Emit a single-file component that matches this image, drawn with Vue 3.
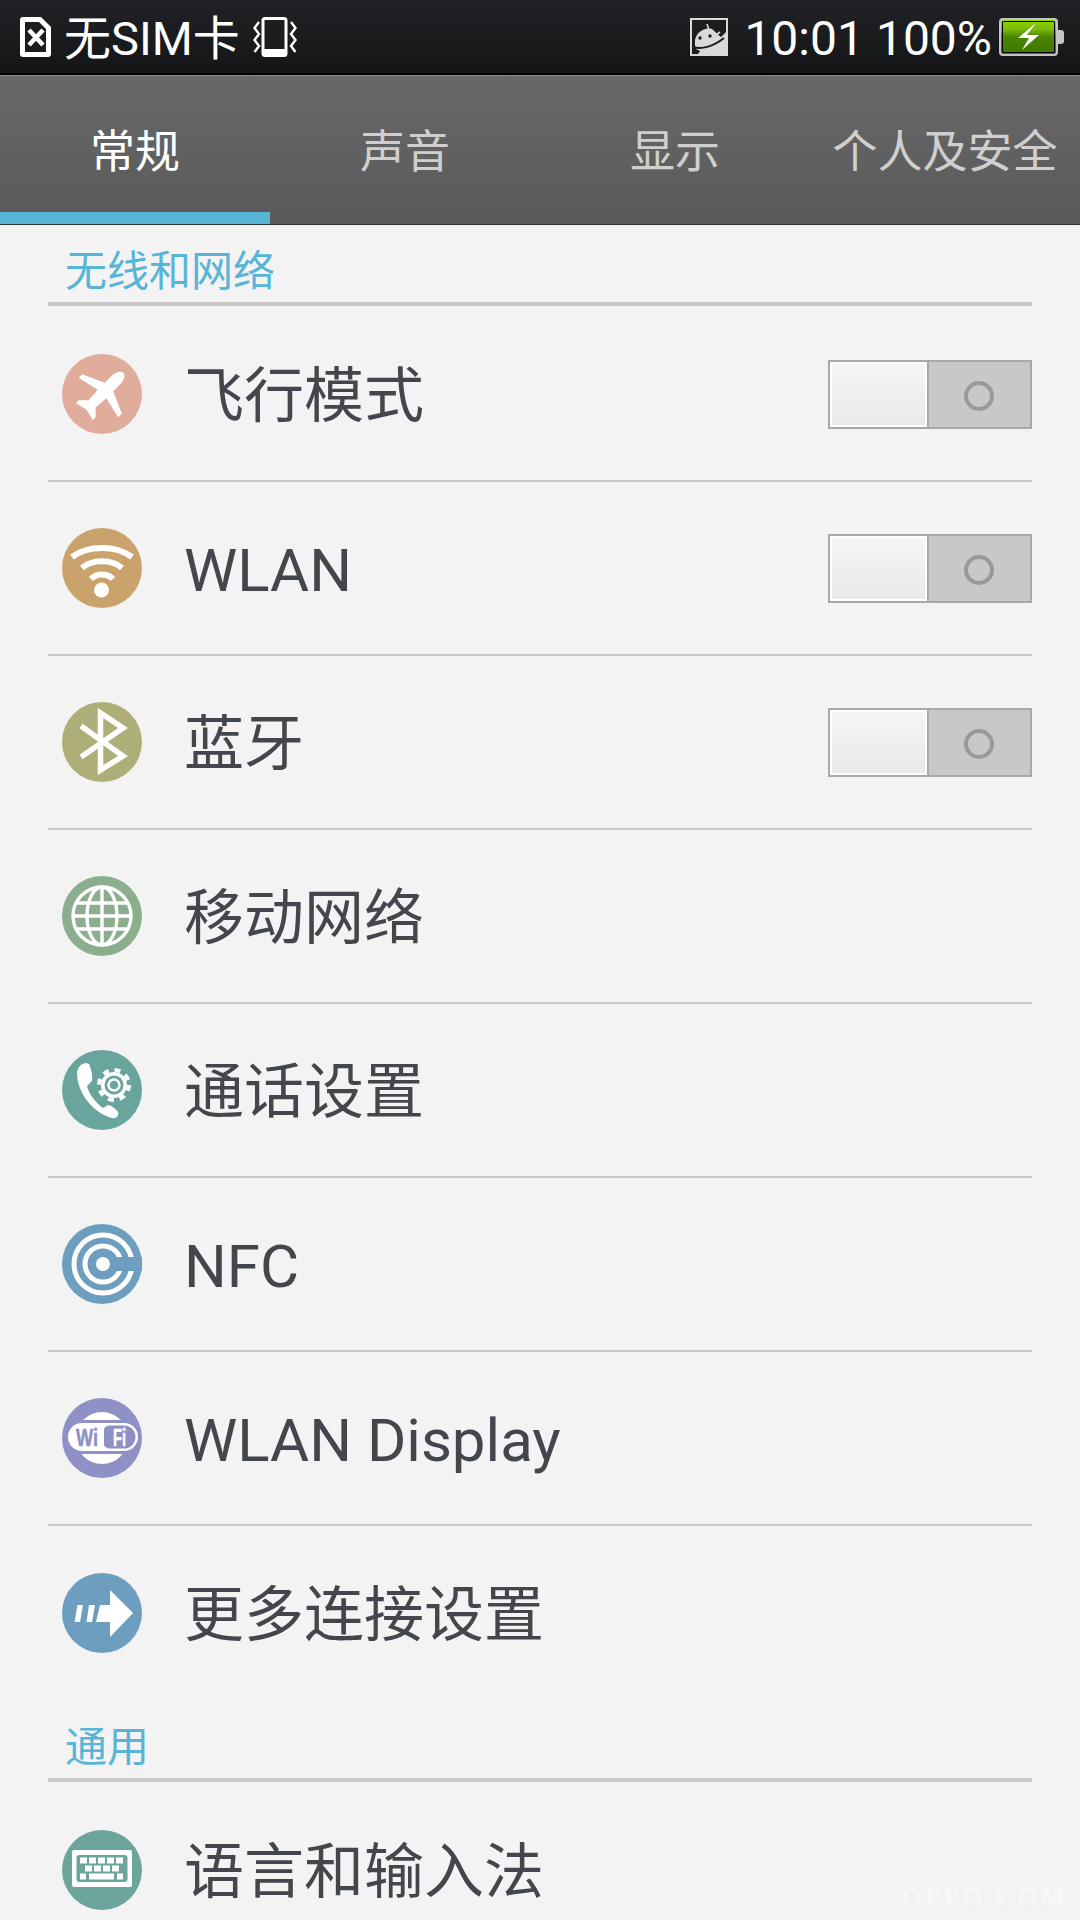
<script setup>
const wireless = [
  { icon: 'plane', color: '#e0ac9c', label: '飞行模式', toggle: true },
  { icon: 'wifi', color: '#c9a36b', label: 'WLAN', toggle: true, latin: true },
  { icon: 'bt', color: '#aeaf78', label: '蓝牙', toggle: true },
  { icon: 'globe', color: '#8aae8e', label: '移动网络' },
  { icon: 'call', color: '#69a59d', label: '通话设置' },
  { icon: 'nfc', color: '#6e9ebf', label: 'NFC', latin: true },
  { icon: 'display', color: '#8f90c6', label: 'WLAN Display', latin: true },
  { icon: 'more', color: '#6e9ebf', label: '更多连接设置' },
]
const tabs = ['常规', '声音', '显示', '个人及安全']
</script>

<template>
  <div class="page">
    <header class="status">
      <svg class="sim" viewBox="0 0 31 40">
        <path d="M3 0H21L31 10V37a3 3 0 0 1-3 3H3a3 3 0 0 1-3-3V3a3 3 0 0 1 3-3Z" fill="#fff" />
        <path d="M5 5H19L26 12V35H5Z" fill="#1c1d1f" />
        <path d="M9 13L23 28M23 13L9 28" stroke="#fff" stroke-width="4.500" fill="none" />
      </svg>
      <span class="carrier">无SIM卡</span>
      <svg class="vibrate" viewBox="0 0 44 40">
        <path d="M12 1.500h19a2 2 0 0 1 2 2v33a2 2 0 0 1-2 2H12a2 2 0 0 1-2-2v-33a2 2 0 0 1 2-2Z" fill="#1c1d1f" stroke="#fff" stroke-width="3" />
        <rect x="10" y="32" width="23" height="7" fill="#fff" />
        <path d="M6 5L1.500 11L6 17L1.500 23L6 29L1.500 35M38 5L42.500 11L38 17L42.500 23L38 29L42.500 35" stroke="#fff" stroke-width="2.400" fill="none" />
      </svg>
      <span class="spacer"></span>
      <svg class="android" viewBox="0 0 38 38">
        <path d="M0 0H38V38H0Z" fill="#d9d9d9" />
        <path d="M2 2H36V14L30 20L14 12L5 22L6 31L10 33L8 36H2Z" fill="#1c1d1f" />
        <path d="M5 24C5 15 14 9 22 11L33 21C31 28 14 33 5 28Z" fill="#d9d9d9" />
        <path d="M17 6L19 12M30 14L26 17" stroke="#d9d9d9" stroke-width="1.600" />
        <circle cx="10" cy="20" r="1.700" fill="#1c1d1f" />
        <circle cx="20" cy="18" r="1.700" fill="#1c1d1f" />
        <path d="M3 29C12 32 24 28 34 20" stroke="#1c1d1f" stroke-width="2" fill="none" />
      </svg>
      <span class="clock">10:01</span>
      <span class="level">100%</span>
      <div class="battery">
        <div class="cell">
          <svg class="bolt" viewBox="0 0 23 27"><path d="M19 0L1 15H12L5 27L22 12H10Z" fill="#fff" /></svg>
        </div>
        <div class="nub"></div>
      </div>
    </header>

    <nav class="tabs">
      <div v-for="(tab, i) in tabs" :key="tab" class="tab" :class="{ active: i === 0 }">{{ tab }}</div>
    </nav>

    <main class="list">
      <h2 class="section first">无线和网络</h2>
      <div v-for="row in wireless" :key="row.label" class="row">
        <svg class="icon" viewBox="0 0 80 80">
          <circle cx="40" cy="40" r="40" :fill="row.color" />
          <g v-if="row.icon === 'plane'" transform="translate(40 40) rotate(45)">
            <path d="M0-30C3-30 6-26 6-20V-10L28 0V5L6 0L5 14L12 21V25L0 22L-12 25V21L-5 14L-6 0L-28 5V0L-6-10V-20C-6-26-3-30 0-30Z" fill="#fff" />
          </g>
          <g v-else-if="row.icon === 'wifi'">
            <path d="M10 29C26 17 54 17 70 29M20 40C30 31 50 31 60 40M29 51C35 45 45 45 51 51" stroke="#fff" stroke-width="6" fill="none" />
            <circle cx="39.500" cy="62" r="7.500" fill="#fff" />
          </g>
          <path v-else-if="row.icon === 'bt'" d="M19 24L61 54L38.500 68V11L61 26L19 55" stroke="#fff" stroke-width="5.500" fill="none" />
          <g v-else-if="row.icon === 'globe'" stroke="#fff" stroke-width="3.400" fill="none">
            <circle cx="40" cy="40" r="29" />
            <path d="M40 11V69M11 40H69M15 27H65M15 53H65" />
            <ellipse cx="40" cy="40" rx="15" ry="29" />
          </g>
          <g v-else-if="row.icon === 'call'">
            <path d="M24 13C18 14 15 18 15 24C16 45 32 63 50 68C55 69 57 65 56 62C54 59 49 55 46 55L41 58C33 52 27 44 25 36L30 31C31 27 29 18 27 14Z" fill="#fff" />
            <circle cx="52" cy="35" r="13" fill="#fff" />
            <circle cx="52" cy="35" r="15" fill="none" stroke="#fff" stroke-width="4" stroke-dasharray="5.900 5.900" />
            <circle cx="52" cy="35" r="9.500" :fill="row.color" />
            <circle cx="52" cy="35" r="5.500" :fill="row.color" stroke="#fff" stroke-width="2.400" />
          </g>
          <g v-else-if="row.icon === 'nfc'">
            <circle cx="41" cy="40" r="29" fill="none" stroke="#fff" stroke-width="5" />
            <circle cx="41" cy="40" r="18" fill="none" stroke="#fff" stroke-width="5" />
            <rect x="41" y="33" width="39" height="14" :fill="row.color" />
            <circle cx="41" cy="40" r="7" fill="#fff" />
          </g>
          <g v-else-if="row.icon === 'display'">
            <circle cx="40" cy="40" r="26" fill="#fff" />
            <rect x="4" y="22" width="72" height="34" :fill="row.color" />
            <rect x="6" y="25" width="70" height="28" rx="14" fill="#fff" />
            <path d="M47 27.500H62a11.500 11.500 0 0 1 0 23H47a8 8 0 0 1-5-3V30.500a8 8 0 0 1 5-3Z" :fill="row.color" />
            <text x="14" y="47.500" class="wi" textLength="22" lengthAdjust="spacingAndGlyphs">Wi</text>
            <text x="51" y="47.500" class="fi" textLength="13" lengthAdjust="spacingAndGlyphs">Fi</text>
          </g>
          <g v-else-if="row.icon === 'more'" fill="#fff">
            <path d="M15.500 32H21L18 49H12.500ZM27 32H33L30 49H24.500ZM38 32H48V17L71 40L48 64V49H34Z" />
          </g>
        </svg>
        <span class="label" :class="row.latin ? 'latin' : 'cjk'">{{ row.label }}</span>
        <div v-if="row.toggle" class="switch">
          <div class="thumb"></div>
          <div class="off"><span class="ring"></span></div>
        </div>
      </div>

      <h2 class="section second">通用</h2>
      <div class="row last">
        <svg class="icon" viewBox="0 0 80 80">
          <circle cx="40" cy="40" r="40" fill="#6ca59c" />
          <rect x="10" y="20" width="60" height="37" rx="2" fill="#fff" />
          <rect x="14.500" y="25" width="51" height="27" rx="3" fill="#6ca59c" />
          <g fill="#fff">
            <rect v-for="x in [18, 27, 36, 45, 54]" :key="x" :x="x" y="27.500" width="7" height="6" />
            <rect v-for="x in [23, 32, 41, 50]" :key="x" :x="x" y="35.500" width="7" height="6" />
            <rect x="18" y="43.500" width="6" height="6" />
            <rect x="27" y="43.500" width="25" height="6" />
            <rect x="55" y="43.500" width="6" height="6" />
          </g>
        </svg>
        <span class="label cjk">语言和输入法</span>
      </div>
    </main>

    <div class="watermark">OPPO.COM</div>
  </div>
</template>

<style scoped>
.page {
  position: relative;
  width: 1080px;
  height: 1920px;
  overflow: hidden;
  background: #f3f3f3;
  font-family: Roboto, "Noto Sans CJK SC", sans-serif;
}
.status {
  box-sizing: border-box;
  height: 75px;
  display: flex;
  align-items: center;
  padding-left: 20px;
  color: #fff;
  background: linear-gradient(#212225, #141517);
  border-bottom: 2px solid #000;
}
.sim { width: 31px; height: 40px; }
.carrier { margin-left: 13px; margin-top: 4px; font-size: 47px; line-height: 50px; }
.vibrate { margin-left: 13px; width: 44px; height: 40px; }
.spacer { flex: 1; }
.android { width: 38px; height: 38px; }
.clock { margin-left: 16px; margin-top: 5px; font-size: 48px; line-height: 50px; }
.level { margin-left: 12px; margin-top: 5px; font-size: 48px; line-height: 50px; }
.battery { margin-left: 7px; margin-right: 16px; display: flex; align-items: center; }
.cell {
  box-sizing: border-box;
  width: 59px;
  height: 38px;
  border: 2px solid #c5c5c5;
  border-radius: 4px;
  outline: 1px solid #000;
  outline-offset: -4px;
  background: linear-gradient(#8ed70a 0, #7ab80a 28%, #4a8400 50%, #3f7800 100%);
  display: flex;
  align-items: center;
  justify-content: center;
}
.bolt { width: 23px; height: 27px; }
.nub { width: 6px; height: 14px; background: #c5c5c5; border-radius: 0 3px 3px 0; }

.tabs {
  box-sizing: border-box;
  height: 150px;
  display: grid;
  grid-template-columns: repeat(4, 270px);
  background: linear-gradient(#686868, #5a5a5a);
  border-top: 1px solid #8a8a8a;
  border-bottom: 1px solid #333;
}
.tab {
  box-sizing: border-box;
  padding-top: 8px;
  display: flex;
  align-items: center;
  justify-content: center;
  font-size: 45px;
  color: #cfcfcf;
  border-bottom: 12px solid transparent;
}
.tab.active { color: #fff; border-bottom-color: #58b5d8; }

.list { display: flex; flex-direction: column; }
.section {
  box-sizing: border-box;
  margin: 0 48px;
  padding-left: 17px;
  font-size: 42px;
  font-weight: 400;
  color: #58b5d8;
  display: flex;
  align-items: flex-end;
  border-bottom: 4px solid #c8c8c8;
}
.section.first { height: 81px; padding-bottom: 4px; margin-bottom: 2px; }
.section.second { height: 82px; padding-bottom: 4px; margin-bottom: 1px; }
.row {
  box-sizing: border-box;
  height: 174px;
  margin: 0 48px;
  display: flex;
  align-items: center;
  border-bottom: 2px solid #c8c8c8;
}
.row:nth-child(9), .row.last { border-bottom: none; }
.icon { margin-left: 14px; width: 80px; height: 80px; flex: none; }
.label { margin-left: 42px; font-size: 60px; color: #43474d; flex: 1; }
.label.cjk { padding-bottom: 7px; }
.label.latin { padding-top: 5px; }
.wi { font: bold 23px "Liberation Sans", sans-serif; fill: #8f90c6; stroke: #8f90c6; stroke-width: 0.5px; }
.fi { font: bold 23px "Liberation Sans", sans-serif; fill: #fff; stroke: #fff; stroke-width: 0.5px; }
.switch {
  box-sizing: border-box;
  width: 204px;
  height: 69px;
  display: flex;
  border: 2px solid #a8a8a8;
  background: #c8c8c8;
}
.thumb {
  box-sizing: border-box;
  width: 97px;
  border: 2px solid #fff;
  background: linear-gradient(#f5f5f5, #e9e9e9);
}
.off {
  flex: 1;
  display: flex;
  align-items: center;
  justify-content: center;
  border-left: 2px solid #a8a8a8;
}
.ring {
  box-sizing: border-box;
  width: 30px;
  height: 30px;
  margin: 3px 1px 0 0;
  border: 4px solid #999;
  border-radius: 50%;
}
.watermark {
  position: absolute;
  right: 12px;
  bottom: 8px;
  font: bold 26px "Liberation Serif", serif;
  letter-spacing: 3px;
  color: #f8f8f8;
}
</style>
